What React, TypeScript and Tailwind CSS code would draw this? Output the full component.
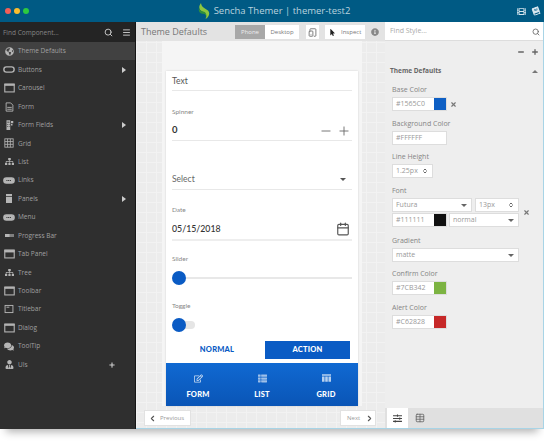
import React from "react";
import { Search, Menu, ChevronLeft, ChevronRight, Plus, Minus, X, Calendar, Table, TabletSmartphone, ChevronsUpDown } from "lucide-react";
import { FaFilm, FaBook, FaInfoCircle, FaMousePointer, FaRegEdit, FaThList, FaSlidersH, FaGlobeAmericas, FaSitemap, FaComments, FaUserTie, FaTh, FaPlus } from "react-icons/fa";

const os = "font-['Open_Sans',sans-serif]";

function Win({ bar }: { bar?: boolean }) {
  return (
    <svg viewBox="0 0 14 12" className="w-[11px] h-[10px]" fill="none" stroke="currentColor">
      <rect x="1" y="1" width="12" height="10" strokeWidth="1.4" />
      <rect x="1" y="1" width="12" height={bar ? 2.6 : 2} fill="currentColor" strokeWidth="0.6" />
    </svg>
  );
}
function Pill({ filled, dots }: { filled?: boolean; dots?: boolean }) {
  return (
    <svg viewBox="0 0 14 8" className="w-[12px] h-[7px]">
      <rect x="1" y="1" width="12" height="6" rx="3" fill={filled ? "currentColor" : "#2f2f2f"} stroke="currentColor" strokeWidth="1.6" />
      {dots && <path d="M4 4h6" stroke="#2f2f2f" strokeWidth="1.4" strokeDasharray="1.2 .8" />}
    </svg>
  );
}
const icons: Record<string, React.ReactNode> = {
  "Theme Defaults": <FaGlobeAmericas className="w-[9px] h-[9px]" />,
  Buttons: <Pill />,
  Carousel: <Win />,
  Form: (
    <svg viewBox="0 0 12 13" className="w-[9px] h-[10px]" fill="none" stroke="currentColor" strokeWidth="1.2">
      <path d="M1.5 1h6l3 3v8h-9z" />
      <path d="M3 7h6M3 9.5h6" />
    </svg>
  ),
  "Form Fields": (
    <svg viewBox="0 0 12 13" className="w-[9px] h-[10px]" fill="currentColor">
      <path d="M2 0h5v13H2zM8 1h3v3H8zM8 5h2v2H8z" />
      <path d="M3 2h3v1H3zM3 5h1v1H3zM5 5h1v1H5zM3 8h1v1H3zM5 8h1v1H5z" fill="#2f2f2f" />
    </svg>
  ),
  Grid: (
    <svg viewBox="0 0 12 12" className="w-[10px] h-[10px]" fill="none" stroke="currentColor" strokeWidth="1">
      <rect x="1" y="1" width="10" height="10" />
      <path d="M1 4.3h10M1 7.6h10M4.3 1v10M7.6 1v10" />
    </svg>
  ),
  List: <FaSitemap className="w-[9px] h-[9px]" />,
  Links: <Pill filled dots />,
  Panels: (
    <svg viewBox="0 0 8 12" className="w-[6px] h-[9px]" fill="currentColor">
      <path d="M0 0h8v2.5H0zM0 3.5h8V12H0z" />
    </svg>
  ),
  Menu: <Pill filled dots />,
  "Progress Bar": (
    <svg viewBox="0 0 12 4" className="w-[9px] h-[3px]">
      <rect width="12" height="4" fill="currentColor" opacity=".6" />
      <rect width="6" height="4" fill="currentColor" />
    </svg>
  ),
  "Tab Panel": <Win bar />,
  Tree: <FaSitemap className="w-[9px] h-[9px]" />,
  Toolbar: <Win />,
  Titlebar: (
    <svg viewBox="0 0 14 12" className="w-[10px] h-[10px]" fill="none" stroke="currentColor" strokeWidth="1.3">
      <rect x="1.5" y="1" width="11" height="10" />
      <path d="M3.5 3.5h4" />
    </svg>
  ),
  Dialog: <Win />,
  ToolTip: <FaComments className="w-[10px] h-[9px]" />,
  UIs: <FaUserTie className="w-[9px] h-[9px]" />,
};
const items: [string, boolean][] = [
  ["Theme Defaults", false], ["Buttons", true], ["Carousel", false], ["Form", false], ["Form Fields", true],
  ["Grid", false], ["List", false], ["Links", false], ["Panels", true], ["Menu", false], ["Progress Bar", false],
  ["Tab Panel", false], ["Tree", false], ["Toolbar", false], ["Titlebar", false], ["Dialog", false], ["ToolTip", false], ["UIs", false],
];

function Swatch({ label, value, color, x }: { label: string; value: string; color: string; x?: boolean }) {
  return (
    <div className="mb-[7.7px]">
      <div className="text-[7px] leading-[10px] text-[#858585] mb-[2px]">{label}</div>
      <div className="flex items-center">
        <div className="flex w-[55px] h-[14px] bg-white border border-[#ddd]">
          <div className="w-[41px] text-[7px] leading-[12px] pl-[3px] text-[#999]">{value}</div>
          <div className="flex-1" style={{ background: color }} />
        </div>
        {x && <X className="w-[7px] h-[7px] ml-[3px] text-[#777]" strokeWidth={4} />}
      </div>
    </div>
  );
}

function Field({ w, text, arrows }: { w: string; text: string; arrows?: boolean }) {
  return (
    <div className={`${w} h-[14px] bg-white border border-[#ddd] flex items-center justify-between pl-[3px] pr-[4px] text-[7px] text-[#999]`}>
      <span>{text}</span>
      {arrows ? <ChevronsUpDown className="w-[6px] h-[6px] text-[#666]" strokeWidth={4} /> : <span className="w-0 h-0 border-x-[3px] border-x-transparent border-t-[3px] border-t-[#666]" />}
    </div>
  );
}

function Label({ children }: { children: React.ReactNode }) {
  return <div className="text-[7px] leading-[10px] text-[#858585] mb-[2px]">{children}</div>;
}
function PhoneLabel({ pt, children }: { pt: string; children: React.ReactNode }) {
  return <div className={`${pt} text-[6.5px] leading-[8px] text-[#888]`}>{children}</div>;
}

export default function App() {
  return (
    <div className={`w-[544px] h-[441px] bg-white overflow-hidden relative ${os}`}>
      <div className="w-[544px] h-[429px] flex flex-col shadow-[0_9px_8px_-6px_rgba(0,0,0,0.3)]">
        <header className="h-[22px] bg-[#005a84] flex items-center relative shrink-0">
          <div className="flex gap-[3px] pl-[5px]">
            <span className="w-[6px] h-[6px] rounded-full bg-[#f25f58]" />
            <span className="w-[6px] h-[6px] rounded-full bg-[#fbbe2e]" />
            <span className="w-[6px] h-[6px] rounded-full bg-[#2dc93f]" />
          </div>
          <div className="flex-1 flex justify-center items-center pl-[2px] text-[#b9d2de] text-[9.5px]">
            <svg width="12" height="16" viewBox="0 0 12 16" className="mr-[4px]">
              <path d="M3 0 C0 4 1 7 5 9 C8 10.5 9 13 7.5 16 C11 14 12.5 10 10 7.5 C7 5 3.5 4.5 3 0Z" fill="#8cc63f" />
              <path d="M1 5 C0 8 2 11 6 11 C8 11 8.5 13 7.5 16 C9.5 12 8 9 5 8.5 C3 8 1.5 7 1 5Z" fill="#2f8f3c" />
            </svg>
            <span>Sencha Themer | themer-test2</span>
          </div>
          <div className="flex items-center gap-[6px] pr-[4px] text-[#d7e6ee]">
            <FaFilm className="w-[9px] h-[9px]" />
            <FaBook className="w-[8px] h-[8px] -rotate-[20deg]" />
          </div>
        </header>

        <div className="flex flex-1 min-h-0">
          <aside className="w-[136px] bg-[#2f2f2f] border-r border-[#151515] shrink-0 flex flex-col text-[#a0a0a0]">
            <div className="h-[20px] bg-[#242424] flex items-center pl-[3px] pr-[4px] pt-[1px] shrink-0">
              <span className="flex-1 text-[6.5px] text-[#858585]">Find Component...</span>
              <Search className="w-[9px] h-[9px] text-[#ccc] mr-[9px]" strokeWidth={2.5} />
              <Menu className="w-[9px] h-[9px] text-[#ccc]" strokeWidth={2.5} />
            </div>
            {items.map(([name, arrow], i) => (
              <div key={name} className={`h-[18.45px] flex items-center text-[6.5px] ${i === 0 ? "bg-[#414141]" : ""}`}>
                <span className="w-[18px] flex items-center justify-center text-[#b5b5b5] shrink-0">{icons[name]}</span>
                <span className="flex-1">{name}</span>
                {arrow && <span className="mr-[9px] w-0 h-0 border-y-[3px] border-y-transparent border-l-[4px] border-l-[#ccc]" />}
                {name === "UIs" && <FaPlus className="w-[6px] h-[6px] mr-[20px] text-[#ccc]" />}
              </div>
            ))}
          </aside>

          <main className="w-[249px] shrink-0 flex flex-col bg-[#ececec] bg-[linear-gradient(#f2f2f2_1px,transparent_1px),linear-gradient(90deg,#f2f2f2_1px,transparent_1px)] bg-[size:10px_10px] border-b border-[#a8d4e6]">
            <div className="h-[19px] bg-[#e3e3e3] flex items-center pl-[5px] pt-[1px] shrink-0 text-[#777]">
              <span className="text-[9px] w-[94px]">Theme Defaults</span>
              <div className="flex text-[6px] h-[14px] leading-[14px]">
                <span className="w-[30px] text-center bg-[#a8a8a8] text-[#eee]">Phone</span>
                <span className="w-[34px] text-center bg-white text-[#777]">Desktop</span>
              </div>
              <span className="ml-[7px] w-[13px] h-[14px] bg-white flex items-center justify-center"><TabletSmartphone className="w-[9px] h-[9px] text-[#555]" /></span>
              <span className="ml-[6px] w-[40px] h-[14px] bg-white flex items-center text-[6px] text-[#777]"><FaMousePointer className="w-[7px] h-[7px] ml-[4px] mr-[5px] text-[#222]" />Inspect</span>
              <FaInfoCircle className="ml-[6px] w-[8px] h-[8px] text-[#888]" />
            </div>
            <div className="flex-1 min-h-0 flex flex-col">
              <div className="mx-[26px] w-[200px] h-[365px] bg-[#f5f5f5] px-[4px] pt-[30px] shrink-0">
                <div className="h-[335px] bg-white flex flex-col shadow-[0_0_2px_rgba(0,0,0,0.15)]">
                  <div className="px-[6px] flex-1 font-['Lato',sans-serif] text-[#555]">
                    <div className="h-[20px] border-b border-[#e8e8e8] text-[8.5px] leading-[20px]">Text</div>
                    <PhoneLabel pt="pt-[17px]">Spinner</PhoneLabel>
                    <div className="h-[25px] border-b border-[#e8e8e8] flex items-center justify-between pr-[1.5px] pt-[5px] text-[#333]">
                      <span className="text-[9.5px] font-bold">0</span>
                      <span className="flex gap-[4px] items-center text-[#666]"><Minus className="w-[14px] h-[14px]" strokeWidth={1.5} /><Plus className="w-[14px] h-[14px]" strokeWidth={1.5} /></span>
                    </div>
                    <div className="mt-[28px] h-[21px] border-b border-[#e8e8e8] flex items-center justify-between pr-[6px] text-[8.5px] text-[#666]">
                      <span>Select</span>
                      <span className="w-0 h-0 border-x-[3px] border-x-transparent border-t-[3px] border-t-[#555]" />
                    </div>
                    <PhoneLabel pt="pt-[16px]">Date</PhoneLabel>
                    <div className="h-[27px] pt-[4px] border-b-2 border-[#eee] flex items-center justify-between pr-[2px] text-[#333]">
                      <span className="text-[8.75px] font-medium">05/15/2018</span>
                      <Calendar className="w-[14px] h-[14px] text-[#555]" strokeWidth={2} />
                    </div>
                    <PhoneLabel pt="pt-[14px]">Slider</PhoneLabel>
                    <div className="h-[30px] flex items-center">
                      <span className="w-[14px] h-[14px] rounded-full bg-[#0a5bc4] shrink-0" />
                      <span className="flex-1 h-[2px] bg-[#e8e8e8]" />
                    </div>
                    <PhoneLabel pt="pt-[9px]">Toggle</PhoneLabel>
                    <div className="h-[30px] flex items-center">
                      <span className="w-[14px] h-[14px] rounded-full bg-[#0a5bc4] relative z-10" />
                      <span className="w-[13px] h-[8px] rounded-r-full bg-[#e5e5e5] -ml-[4px]" />
                    </div>
                    <div className="flex items-center mt-[1px] h-[18px] text-[7.5px] font-black tracking-[0.2px]">
                      <span className="w-[90px] text-center text-[#0a5bc4]">NORMAL</span>
                      <span className="ml-[3px] w-[85px] h-[18px] bg-[#0a5bc4] text-white text-center leading-[18px]">ACTION</span>
                    </div>
                  </div>
                  <div className="h-[43px] bg-gradient-to-b from-[#1069d2] to-[#0a55b6] flex text-white font-['Lato',sans-serif] text-[7.5px] leading-[10px] font-black tracking-[0.2px]">
                    <div className="flex-1 flex flex-col items-center pt-[11px]"><FaRegEdit className="w-[9px] h-[9px] mb-[7px] opacity-80" />FORM</div>
                    <div className="flex-1 flex flex-col items-center pt-[11px]"><FaThList className="w-[9px] h-[9px] mb-[7px] opacity-60" />LIST</div>
                    <div className="flex-1 flex flex-col items-center pt-[11px]">
                      <svg viewBox="0 0 12 10" className="w-[9px] h-[8px] mb-[8px] opacity-70" fill="currentColor">
                        <path d="M0 0h12v2H0zM0 3h3.4v7H0zM4.3 3h3.4v7H4.3zM8.6 3H12v7H8.6z" />
                      </svg>
                      GRID
                    </div>
                  </div>
                </div>
              </div>
              <div className="flex justify-between pl-[8px] pr-[9px] mt-[4px] text-[6px] text-[#999]">
                <span className="w-[47px] h-[16px] bg-white border border-[#e2e2e2] flex items-center"><ChevronLeft className="w-[9px] h-[9px] mx-[3px] text-[#555]" strokeWidth={3} />Previous</span>
                <span className="w-[36px] h-[16px] bg-white border border-[#e2e2e2] flex items-center pl-[6px]">Next<ChevronRight className="w-[9px] h-[9px] ml-[5px] text-[#555]" strokeWidth={3} /></span>
              </div>
            </div>
          </main>

          <aside className="flex-1 bg-[#eeeeee] flex flex-col border-r border-b border-[#a8d4e6]">
            <div className="h-[19px] bg-white border-b border-[#ddd] flex items-center pl-[5px] pr-[3px] pt-[1px] shrink-0 text-[7px] text-[#aaa]">
              <span className="flex-1">Find Style...</span>
              <Search className="w-[8px] h-[8px] text-[#666]" strokeWidth={2.5} />
            </div>
            <div className="flex justify-end gap-[6px] pr-[4px] pt-[7px] text-[#666]">
              <Minus className="w-[8px] h-[8px]" strokeWidth={4} />
              <Plus className="w-[8px] h-[8px]" strokeWidth={4} />
            </div>
            <div className="flex-1 pl-[5px] pt-[10px]">
              <div className="flex justify-between items-center mb-[9px] pr-[5px] leading-[10px]">
                <span className="text-[6.5px] font-bold text-[#666]">Theme Defaults</span>
                <span className="w-0 h-0 border-x-[3px] border-x-transparent border-b-[3px] border-b-[#777]" />
              </div>
              <div className="pl-[2px]">
                <Swatch label="Base Color" value="#1565C0" color="#0e5fc4" x />
                <Swatch label="Background Color" value="#FFFFFF" color="#ffffff" />
                <div className="mb-[7.7px]">
                  <Label>Line Height</Label>
                  <Field w="w-[41px]" text="1.25px" arrows />
                </div>
                <div className="mb-[9px]">
                  <Label>Font</Label>
                  <div className="flex items-center">
                    <div className="flex flex-col gap-[1px]">
                      <div className="flex gap-[3px]">
                        <Field w="w-[80px]" text="Futura" />
                        <Field w="w-[44px]" text="13px" arrows />
                      </div>
                      <div className="flex gap-[2px]">
                        <div className="flex w-[55px] h-[14px] bg-white border border-[#ddd]">
                          <div className="w-[41px] text-[7px] leading-[12px] pl-[3px] text-[#999]">#111111</div>
                          <div className="flex-1 bg-[#111]" />
                        </div>
                        <Field w="w-[70px]" text="normal" />
                      </div>
                    </div>
                    <X className="w-[7px] h-[7px] ml-[4px] text-[#777]" strokeWidth={4} />
                  </div>
                </div>
                <div className="mb-[7px]">
                  <Label>Gradient</Label>
                  <Field w="w-[127px]" text="matte" />
                </div>
                <Swatch label="Confirm Color" value="#7CB342" color="#7cb342" />
                <Swatch label="Alert Color" value="#C62828" color="#c62828" />
              </div>
            </div>
            <div className="h-[20px] bg-[#e0e0e0] flex shrink-0">
              <span className="ml-[2px] w-[21px] bg-white flex items-center justify-center"><FaSlidersH className="w-[9px] h-[9px] text-[#444]" /></span>
              <span className="w-[24px] flex items-center justify-center"><Table className="w-[10px] h-[10px] text-[#666]" /></span>
            </div>
          </aside>
        </div>
      </div>
    </div>
  );
}
